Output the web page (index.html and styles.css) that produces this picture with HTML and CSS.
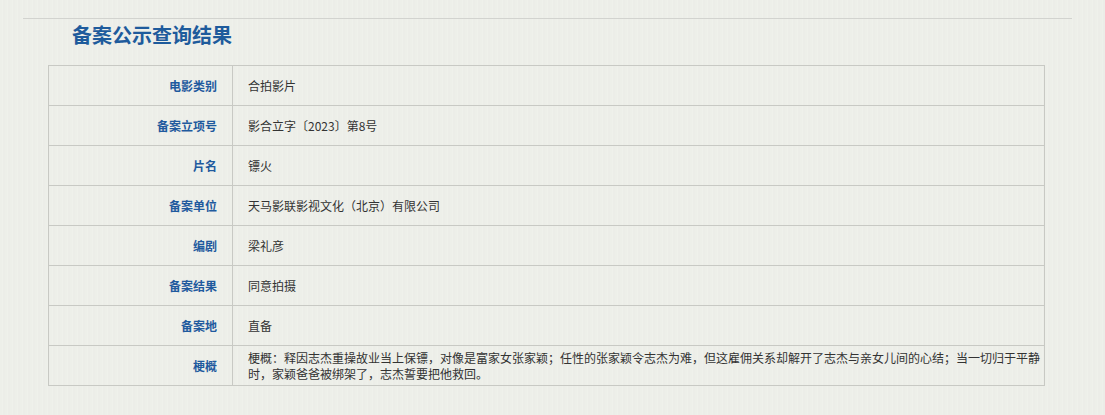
FILE: index.html
```html
<!DOCTYPE html>
<html lang="zh-CN">
<head>
  <meta charset="UTF-8" />
  <meta name="viewport" content="width=device-width, initial-scale=1.0" />
  <title>备案公示查询结果</title>
  <link rel="stylesheet" href="styles.css">
</head>
<body>
  <div class="wrap">
    <h2 class="title">备案公示查询结果</h2>
    <table class="result">
      <tr><th>电影类别</th><td>合拍影片</td></tr>
      <tr><th>备案立项号</th><td>影合立字〔2023〕第8号</td></tr>
      <tr><th>片名</th><td>镖火</td></tr>
      <tr><th>备案单位</th><td>天马影联影视文化（北京）有限公司</td></tr>
      <tr><th>编剧</th><td>梁礼彦</td></tr>
      <tr><th>备案结果</th><td>同意拍摄</td></tr>
      <tr><th>备案地</th><td>直备</td></tr>
      <tr class="long"><th>梗概</th><td>梗概：释因志杰重操故业当上保镖，对像是富家女张家颖；任性的张家颖令志杰为难，但这雇佣关系却解开了志杰与亲女儿间的心结；当一切归于平静时，家颖爸爸被绑架了，志杰誓要把他救回。</td></tr>
    </table>
  </div>
</body>
</html>
```

FILE: styles.css
```css
body {
  margin: 0;
  font-family: "Noto Sans CJK SC", "Microsoft YaHei", sans-serif;
  font-size: 12px;
  color: #333;
  background-color: #edefe9;
  background-image: repeating-linear-gradient(90deg, #edefe9 0, #edefe9 2px, #eff1eb 2px, #eff1eb 3px, #ecede8 3px, #ecede8 5px);
}
.wrap {
  margin: 18px 0 0 23px;
  width: 1049px;
  border-top: 1px solid #d2d3cf;
}
.title {
  margin: 0 0 0 49px;
  padding-top: 2px;
  height: 44px;
  line-height: 28px;
  font-size: 20px;
  font-weight: bold;
  color: #1e5b9c;
}
.result {
  margin-left: 25px;
  width: 997px;
  border-collapse: collapse;
  border: 1px solid #c8c9c4;
}
.result th,
.result td {
  border: 1px solid #c8c9c4;
  height: 40px;
  padding: 0 4px 0 15px;
  line-height: 16px;
  box-sizing: border-box;
}
.result th {
  width: 184px;
  padding: 0 15px 0 0;
  text-align: right;
  font-weight: bold;
  color: #1f5a9e;
}
.result td {
  text-align: left;
}
.result .long th,
.result .long td {
  padding-top: 3px;
  padding-bottom: 3px;
}
```
